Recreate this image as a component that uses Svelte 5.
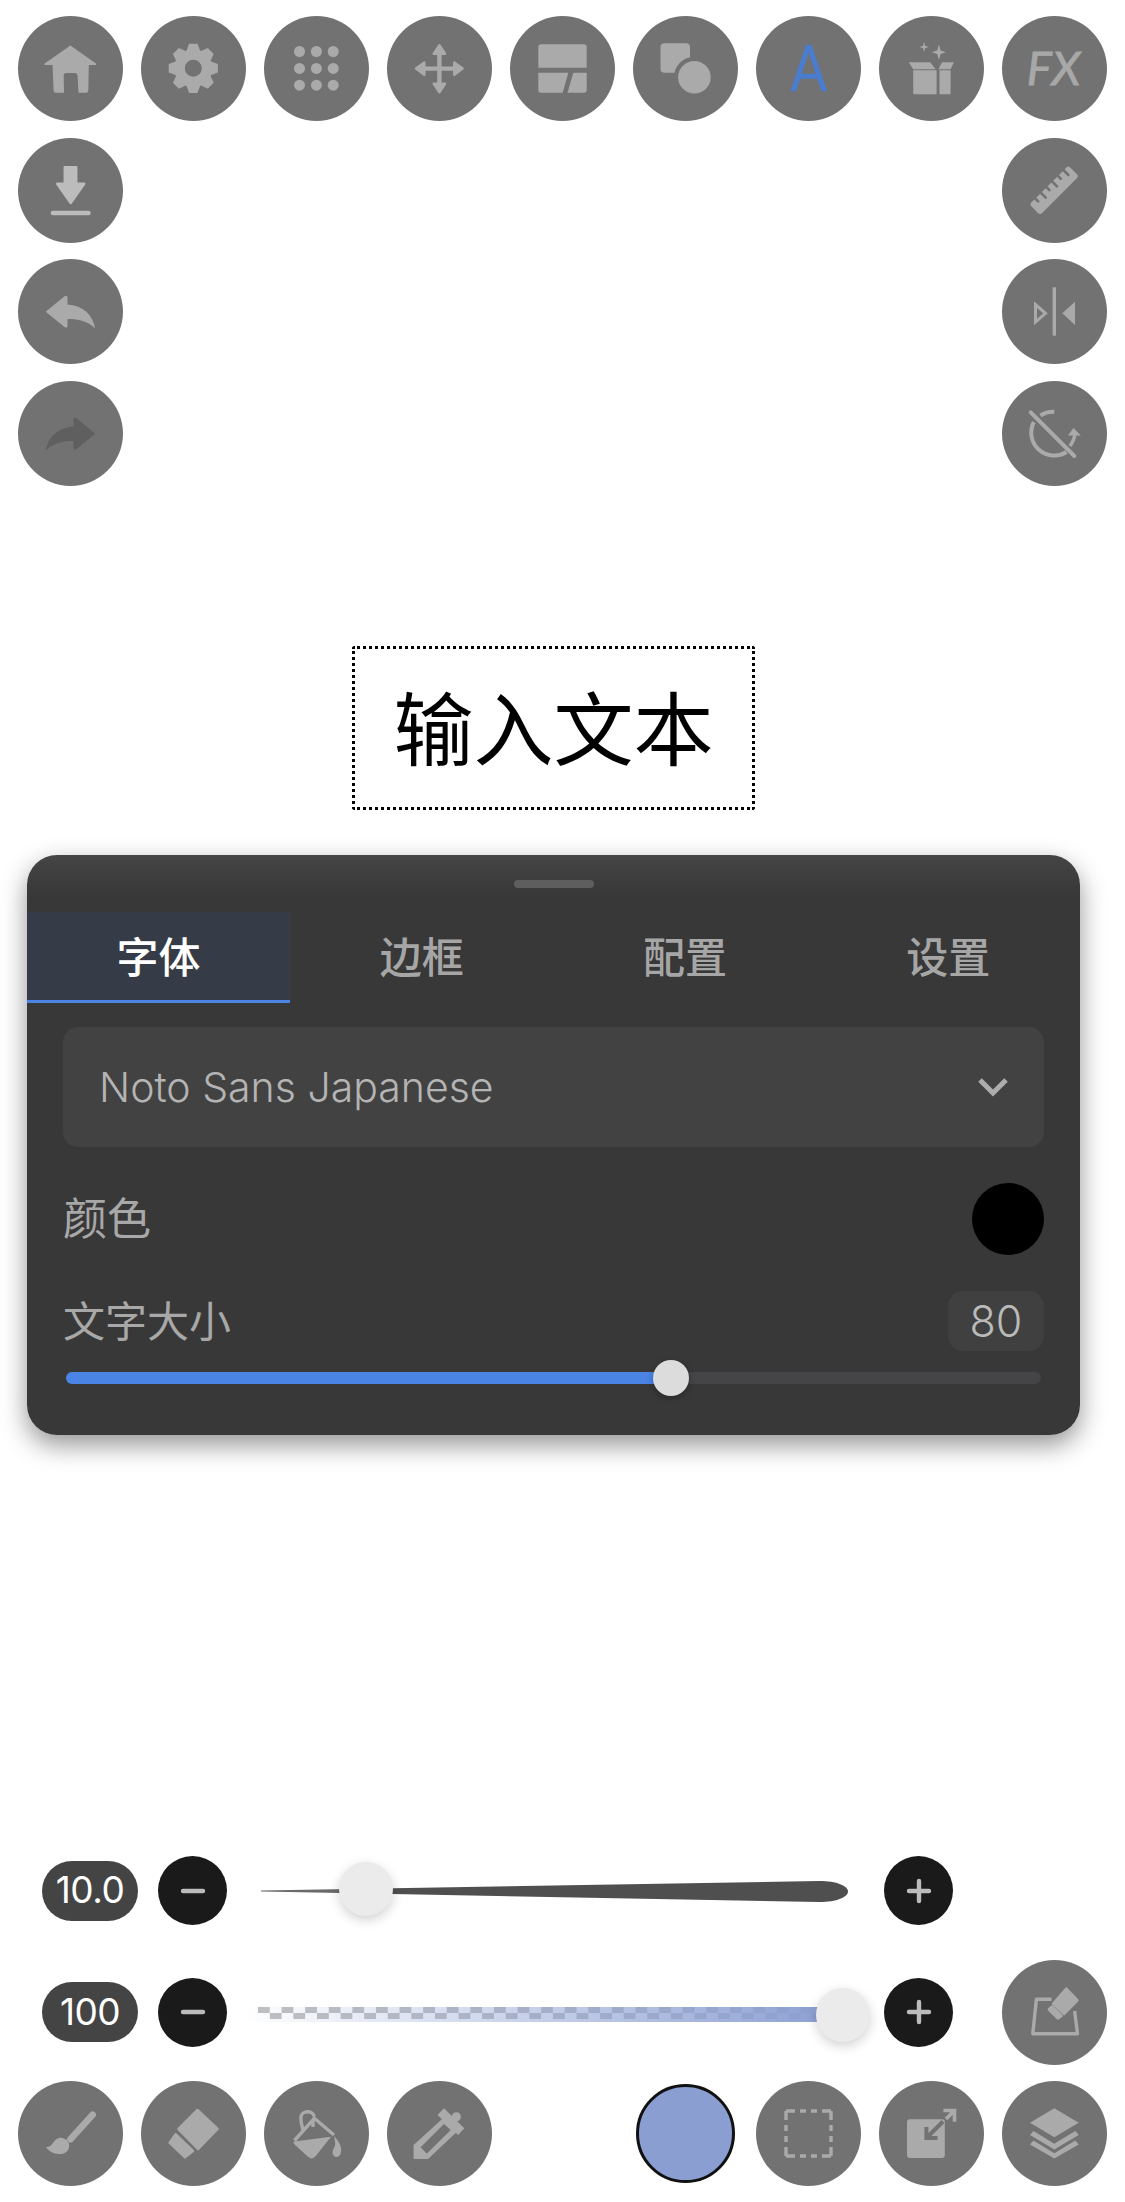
<script>
  const tabs = ['字体', '边框', '配置', '设置'];
  let activeTab = 0;

  const fontSize = 80;
  const sizePct = 62; // thumb position of the text size slider

  // 8 tooth gear, centre 52.3, with a hole
  function gearPath() {
    const cx = 52.3, cy = 52.3, teeth = 8;
    let d = '';
    for (let i = 0; i < teeth; i++) {
      const a = (i * Math.PI * 2) / teeth - Math.PI / 2;
      const pts = [
        [19, -0.36],
        [25, -0.17],
        [25, 0.17],
        [19, 0.36]
      ];
      for (const [r, o] of pts) {
        const x = cx + r * Math.cos(a + o);
        const y = cy + r * Math.sin(a + o);
        d += (d ? 'L' : 'M') + x.toFixed(1) + ' ' + y.toFixed(1);
      }
    }
    d += 'Z M60.8 52.3a8.5 8.5 0 1 0-17 0a8.5 8.5 0 1 0 17 0Z';
    return d;
  }

  const dots = [35.5, 52.4, 69.2];
</script>

{#snippet tool(icon)}
  <button class="tool">
    <svg viewBox="0 0 105 105" width="105" height="105">
      {@render icon()}
    </svg>
  </button>
{/snippet}

{#snippet home()}
  <path class="ic" stroke-linejoin="round" d="M52.4 29.5L78 47.5V49H70.8L70.3 74.5Q70.2 76.7 68 76.7H60.5L59.6 60Q59.4 57 56.5 57H48.5Q45.6 57 45.7 60L46 76.7H38Q35.7 76.7 35.6 74.5L34.5 49H26.6V47.5Z" />
{/snippet}
{#snippet gear()}
  <path class="ic" fill-rule="evenodd" stroke-linejoin="round" d={gearPath()} />
{/snippet}
{#snippet grid()}
  {#each dots as y}
    {#each dots as x}
      <circle class="ic" cx={x} cy={y} r="5.5" />
    {/each}
  {/each}
{/snippet}
{#snippet move()}
  <path class="ln" stroke-width="4.4" d="M52.4 34V71M34 52.6H71" />
  <path class="ic rj" d="M52.4 29.3L58 37.7H46.8ZM52.4 76.3L58 67.7H46.8ZM29 52.6L37.3 46.5V58.7ZM75.6 52.6L67.3 46.5V58.7Z" />
{/snippet}
{#snippet layout()}
  <path class="ic" d="M31 28.3H74A2.7 2.7 0 0 1 76.7 31V51.7H28.3V31A2.7 2.7 0 0 1 31 28.3Z" />
  <path class="ic" d="M28.3 56.7H58.3L52.7 76.7H31A2.7 2.7 0 0 1 28.3 74ZM63.3 56.7H76.7V74A2.7 2.7 0 0 1 74 76.7H57.5Z" />
{/snippet}
{#snippet shapes()}
  <rect class="ic" x="27.5" y="27.3" width="29.5" height="29.5" rx="4" />
  <circle class="hole" cx="61.4" cy="61.3" r="20.5" />
  <circle class="ic" cx="61.4" cy="61.3" r="16.3" />
{/snippet}
{#snippet letterA()}
  <text class="glyph-a" transform="translate(52.6 75.3) scale(0.84 1)" text-anchor="middle">A</text>
{/snippet}
{#snippet gift()}
  <path class="ic" d="M34.2 54.3H57.6V78.3H35.2A1 1 0 0 1 34.2 77.3ZM60.5 54.3H71.6V77.3A1 1 0 0 1 70.6 78.3H60.5Z" />
  <path class="ic" d="M29.8 46.3H51.2L56.6 53.3H34.2ZM63 46.3H74.9L71.6 53.3H59.4Z" />
  <path class="ic" d="M59.9 28.6L61.6 34.6L66.9 36.3L61.6 38L59.9 44L58.2 38L52.9 36.3L58.2 34.6ZM45.1 26L46.2 29.9L50 31L46.2 32.1L45.1 36L44 32.1L40.2 31L44 29.9Z" />
{/snippet}
{#snippet fx()}
  <text class="glyph-fx" x="51.5" y="69" text-anchor="middle">FX</text>
{/snippet}
{#snippet download()}
  <path class="ic light rj" d="M46.8 29.2H58.2V45.8H66.2L52.7 65L39.2 45.8H46.8Z" />
  <rect class="ic light" x="32.7" y="72.7" width="40" height="4.6" rx="2.3" />
{/snippet}
{#snippet undo()}
  <path class="ic" d="M27.7 52.7L46.5 37.3Q49 35.6 49.5 38.3V45.5C65 46.5 75 56 77.2 69.5C70 62.5 62 60 49.5 60V67Q49 69.7 46.5 68.1Z" />
{/snippet}
{#snippet redo()}
  <path class="ic dim" d="M77.3 52.7L58.5 37.3Q56 35.6 55.5 38.3V45.5C40 46.5 30 56 27.8 69.5C35 62.5 43 60 55.5 60V67Q56 69.7 58.5 68.1Z" />
{/snippet}
{#snippet ruler()}
  <g transform="rotate(-45 52.2 52.3)">
    <rect class="ic" x="24.7" y="44.8" width="55" height="15" rx="3" />
    <path class="tick" d="M33 44.8V48.8M41 44.8V51.5M49 44.8V48.8M57 44.8V51.5M65 44.8V48.8M73 44.8V51.5" />
  </g>
{/snippet}
{#snippet mirror()}
  <path class="ln" stroke-width="3.4" d="M52.3 28.3V76.7" />
  <path class="ln" stroke-width="3" d="M33.5 45.5V63L43.5 54.3Z" />
  <path class="ic" d="M73 42.7V66L60.3 54.3Z" />
{/snippet}
{#snippet rotate()}
  <path class="ln" stroke-width="4" stroke-linecap="round" d="M28.7 31.3L72.3 75" />
  <path class="ln" stroke-width="4" d="M38.5 34.5A23 23 0 0 1 52.3 30.7M31.8 41A23 23 0 0 0 64.5 71" />
  <path class="ln" stroke-width="3.4" d="M73 52C72.6 57 71 61 68 65" />
  <path class="ic" d="M71.5 47L78.8 54.5H66Z" />
{/snippet}
{#snippet edit()}
  <path class="ln" stroke-width="3.4" stroke-linejoin="round" d="M49.5 39.3H34.4L30.8 73.7H75.5L72.6 51" />
  <path class="ic rj" d="M64.3 28.5L75.5 40.3L62 54L51 43.7Z" />
  <path class="ic rj" d="M50 46.5L59.5 56L56 58.5L46.8 49.5Z" />
{/snippet}
{#snippet brush()}
  <path class="ln" stroke-width="6.6" stroke-linecap="round" d="M74.6 33.8L52.5 58.2" />
  <path class="ic" d="M27.7 66.3C33 66 34 63 36 60.5C39 56.5 43 56 46 57.5C50 59 52 63 51 66.5C50 71 46 73.5 41 73C35 73 31 70 27.7 66.3Z" />
{/snippet}
{#snippet eraser()}
  <path class="ic rj" d="M56.5 29L76.6 48L57.2 68L37.5 48Z" />
  <path class="ic rj" d="M34.7 53.3L52 70L44 76.3L28.6 61.7Z" />
{/snippet}
{#snippet bucket()}
  <path class="ln" stroke-width="3.4" stroke-linejoin="round" d="M30.5 59.5L50.3 37.3L70 54M39.5 50.5C37.5 44 36.5 39 37 35.5C38 29.5 49 29 50 35.5M49 39V46" />
  <path class="ic" d="M30 60.5L67 55.8L52 74.8Q48 79.5 44 75.8L30.5 63.5Q28.5 62 30 60.5Z" />
  <path class="ic" d="M70 55C75 60 78 66 77 71C76.5 76 72 77 70 75C68 73 68 70 70 67C72 64 71 60 70 55Z" />
{/snippet}
{#snippet dropper()}
  <path class="ic" d="M50.5 34L57 27.3L77.3 47.3L71.2 54Z" />
  <circle class="ic" cx="69.4" cy="35.7" r="4.5" />
  <path class="ic" fill-rule="evenodd" d="M26.6 78V64L55.9 37.3L70 50.7L41 78ZM33.7 66.3L39.8 72.7L63.7 49L57 43Z" />
{/snippet}
{#snippet selection()}
  <path class="ln" stroke-width="3.4" stroke-dasharray="9 5 6 5 6 5 9 0" d="M30 30H75V75H30Z" />
{/snippet}
{#snippet scale()}
  <rect class="ic" x="28" y="38.3" width="37.8" height="38.7" rx="3" />
  <path class="ln cut" stroke-width="4" d="M47.4 46V57H58.5M47.4 57L64 40.5" />
  <path class="ln" stroke-width="3.6" d="M64.4 29.5H75.5V40.7M75.5 29.5L67 38" />
{/snippet}
{#snippet layers()}
  <path class="ic" d="M52.3 27.3L76.7 41.7L52.3 56.3L28 41.7Z" />
  <path class="ic" d="M31.5 50L52.3 62.8L73.3 50L76.7 54L52.3 68.5L28 54Z" />
  <path class="ic" d="M31.5 59.5L52.3 72.3L73.3 59.5L76.7 63.5L52.3 77.5L28 63.5Z" />
{/snippet}

<div class="page">
  <div class="top-row">
    {@render tool(home)}
    {@render tool(gear)}
    {@render tool(grid)}
    {@render tool(move)}
    {@render tool(layout)}
    {@render tool(shapes)}
    {@render tool(letterA)}
    {@render tool(gift)}
    {@render tool(fx)}
  </div>

  <div class="side-tools">
    <div class="col">
      {@render tool(download)}
      {@render tool(undo)}
      {@render tool(redo)}
    </div>
    <div class="col">
      {@render tool(ruler)}
      {@render tool(mirror)}
      {@render tool(rotate)}
    </div>
  </div>

  <div class="stage">
    <div class="text-box">输入文本</div>
  </div>

  <section class="panel">
    <div class="handle"></div>
    <div class="tabs">
      {#each tabs as t, i}
        <div class="tab" class:active={i === activeTab}>{t}</div>
      {/each}
    </div>
    <div class="select">
      <span>Noto Sans Japanese</span>
      <svg width="30" height="20" viewBox="0 0 30 20">
        <path d="M2 3L15 16L28 3" fill="none" stroke="#adadad" stroke-width="5" />
      </svg>
    </div>
    <div class="row color-row">
      <span class="label big">颜色</span>
      <div class="swatch"></div>
    </div>
    <div class="row size-row">
      <span class="label">文字大小</span>
      <div class="value">{fontSize}</div>
    </div>
    <div class="track">
      <div class="fill" style="width: {sizePct}%"></div>
      <div class="knob" style="left: {sizePct}%"></div>
    </div>
  </section>

  <div class="bottom">
    <div class="tool-row">
      <div class="pill">10.0</div>
      <button class="step"><svg width="26" height="26" viewBox="0 0 26 26"><path d="M3 13H23" /></svg></button>
      <div class="slider">
        <svg class="taper" width="657" height="69" viewBox="0 0 657 69">
          <defs>
            <linearGradient id="taperFill" gradientUnits="userSpaceOnUse" x1="0" x2="657" y1="0" y2="0">
              <stop offset="0.2" stop-color="#6a6a6a" />
              <stop offset="0.2" stop-color="#4f4f4f" />
            </linearGradient>
          </defs>
          <path fill="url(#taperFill)" d="M34 34.4L592 25C610 25 621 30 621 35.5C621 41 610 46 592 46L34 35.6Z" />
        </svg>
        <div class="thumb" style="left: 112px; top: 6px"></div>
      </div>
      <button class="step"><svg width="26" height="26" viewBox="0 0 26 26"><path d="M3 13H23M13 3V23" /></svg></button>
    </div>

    <div class="tool-row">
      <div class="pill">100</div>
      <button class="step"><svg width="26" height="26" viewBox="0 0 26 26"><path d="M3 13H23" /></svg></button>
      <div class="slider">
        <div class="alpha"></div>
        <div class="thumb" style="left: 589px; top: 10px"></div>
      </div>
      <button class="step"><svg width="26" height="26" viewBox="0 0 26 26"><path d="M3 13H23M13 3V23" /></svg></button>
      <div class="grow"></div>
      {@render tool(edit)}
    </div>

    <div class="tool-row last">
      {@render tool(brush)}
      {@render tool(eraser)}
      {@render tool(bucket)}
      {@render tool(dropper)}
      <div class="color-btn"></div>
      {@render tool(selection)}
      {@render tool(scale)}
      {@render tool(layers)}
    </div>
  </div>
</div>

<style>
  :global(body) {
    margin: 0;
    background: #fff;
  }

  .page {
    width: 1125px;
    height: 2202px;
    box-sizing: border-box;
    padding: 16px 18px;
    display: flex;
    flex-direction: column;
    overflow: hidden;
    font-family: Inter, 'Noto Sans CJK SC', sans-serif;
  }

  .tool {
    width: 105px;
    height: 105px;
    flex: none;
    padding: 0;
    border: none;
    border-radius: 50%;
    background: #727272;
    display: block;
  }
  .tool svg {
    display: block;
  }

  .ic {
    fill: #aaa;
  }
  .light {
    fill: #bcbcbc;
  }
  .dim {
    fill: #5f5f5f;
  }
  .rj {
    stroke: #aaa;
    stroke-width: 2.5;
    stroke-linejoin: round;
  }
  .light.rj {
    stroke: #bcbcbc;
  }
  .ln {
    fill: none;
    stroke: #aaa;
  }
  .ln.cut {
    stroke: #727272;
  }
  .hole {
    fill: #727272;
  }
  .tick {
    fill: none;
    stroke: #727272;
    stroke-width: 2.6;
    stroke-linecap: round;
  }
  .glyph-a {
    font-family: Lato, sans-serif;
    font-size: 64px;
    fill: #4a7dcf;
    stroke: #4a7dcf;
    stroke-width: 0.5;
  }
  .glyph-fx {
    font-family: Lato, sans-serif;
    font-size: 47px;
    font-style: italic;
    fill: #a8a8a8;
    stroke: #a8a8a8;
    stroke-width: 0.9;
  }

  .top-row {
    display: flex;
    gap: 18px;
  }
  .side-tools {
    display: flex;
    justify-content: space-between;
    margin-top: 16.5px;
  }
  .col {
    display: flex;
    flex-direction: column;
    gap: 16.5px;
  }

  .stage {
    margin: 160px 27px 0 9px;
    display: flex;
    justify-content: center;
  }
  .text-box {
    width: 403px;
    height: 164px;
    box-sizing: border-box;
    padding-bottom: 7px;
    border: 3px dotted #000;
    border-radius: 3px;
    display: flex;
    align-items: center;
    justify-content: center;
    font-family: 'Noto Sans CJK SC', sans-serif;
    font-size: 80px;
    color: #000;
  }

  .panel {
    position: relative;
    margin: 45px 27px 0 9px;
    height: 580px;
    flex: none;
    border-radius: 30px;
    background: linear-gradient(#454545 0, #383838 40px);
    box-shadow: 0 10px 26px rgba(0, 0, 0, 0.42);
    display: flex;
    flex-direction: column;
  }
  .handle {
    width: 80px;
    height: 8px;
    margin: 25px auto 0;
    border-radius: 4px;
    background: #5e5e5e;
  }
  .tabs {
    margin-top: 24px;
    height: 91px;
    display: flex;
  }
  .tab {
    flex: 1;
    display: flex;
    align-items: center;
    justify-content: center;
    box-sizing: border-box;
    padding-bottom: 6px;
    font-family: 'Noto Sans CJK SC', sans-serif;
    font-size: 42px;
    font-weight: 500;
    color: #a6a6a6;
  }
  .tab.active {
    background: #353c47;
    color: #fff;
    border-bottom: 3px solid #4a84e4;
    padding-bottom: 3px;
  }
  .select {
    margin: 24px 36px 0;
    height: 120px;
    flex: none;
    box-sizing: border-box;
    padding: 0 36px 0 36px;
    border-radius: 15px;
    background: #424242;
    display: flex;
    align-items: center;
    justify-content: space-between;
    font-size: 41px;
    font-weight: 350;
    color: #b4b4b4;
  }
  .row {
    margin: 36px 36px 0;
    display: flex;
    align-items: center;
    justify-content: space-between;
  }
  .label {
    margin-top: -5px;
    font-family: 'Noto Sans CJK SC', sans-serif;
    font-size: 42px;
    font-weight: 400;
    color: #a8a8a8;
  }
  .label.big {
    font-size: 44px;
  }
  .color-row {
    height: 72px;
  }
  .size-row {
    height: 60px;
  }
  .swatch {
    width: 72px;
    height: 72px;
    border-radius: 50%;
    background: #000;
  }
  .value {
    width: 96px;
    height: 60px;
    border-radius: 15px;
    background: #404040;
    display: flex;
    align-items: center;
    justify-content: center;
    font-size: 43px;
    font-weight: 300;
    color: #bababa;
  }
  .track {
    position: relative;
    margin: 21px 39px 0;
    height: 12px;
    border-radius: 6px;
    background: #454547;
  }
  .fill {
    height: 100%;
    border-radius: 6px 0 0 6px;
    background: #4a84e4;
  }
  .knob {
    position: absolute;
    top: -12px;
    width: 36px;
    height: 36px;
    margin-left: -18px;
    border-radius: 50%;
    background: #dcdcdc;
    box-shadow: 0 2px 6px rgba(0, 0, 0, 0.3);
  }

  .bottom {
    margin-top: auto;
    display: flex;
    flex-direction: column;
    gap: 16.5px;
  }
  .tool-row {
    height: 105px;
    display: flex;
    align-items: center;
    padding-left: 24px;
  }
  .tool-row.last {
    padding-left: 0;
    gap: 18px;
  }
  .grow {
    flex: 1;
  }
  .pill {
    width: 96px;
    height: 60px;
    box-sizing: border-box;
    padding-bottom: 2px;
    margin-right: 20px;
    border-radius: 30px;
    background: #444;
    display: flex;
    align-items: center;
    justify-content: center;
    font-size: 37px;
    font-weight: 400;
    letter-spacing: -0.5px;
    color: #fff;
  }
  .step {
    width: 69px;
    height: 69px;
    flex: none;
    padding: 0;
    border: none;
    border-radius: 50%;
    background: #1a1a1a;
    display: flex;
    align-items: center;
    justify-content: center;
  }
  .step path {
    fill: none;
    stroke: #bbb;
    stroke-width: 4.4;
    stroke-linecap: round;
  }
  .slider {
    position: relative;
    width: 657px;
    height: 69px;
    flex: none;
    display: flex;
    align-items: center;
  }
  .taper {
    display: block;
  }
  .thumb {
    position: absolute;
    width: 54px;
    height: 54px;
    border-radius: 50%;
    background: #ebebeb;
    box-shadow: 0 4px 12px rgba(0, 0, 0, 0.18);
  }
  .alpha {
    width: 600px;
    height: 15px;
    margin: 4px 0 0 16px;
    padding-left: 15px;
    box-sizing: border-box;
    border-radius: 4px 0 0 4px;
    background-image:
      linear-gradient(to right, rgba(138, 158, 210, 0), #8a9ed2),
      conic-gradient(transparent 25%, #c0c0c0 0 50%, transparent 0 75%, #c0c0c0 0);
    background-size: 100% 100%, 23.6px 12px;
    background-repeat: no-repeat, repeat-x;
    background-clip: border-box, content-box;
    background-origin: border-box, content-box;
  }
  .color-btn {
    width: 99px;
    height: 99px;
    flex: none;
    box-sizing: border-box;
    margin-left: auto;
    margin-right: 3px;
    border: 3px solid #111;
    border-radius: 50%;
    background: #8a9ed2;
  }
</style>
